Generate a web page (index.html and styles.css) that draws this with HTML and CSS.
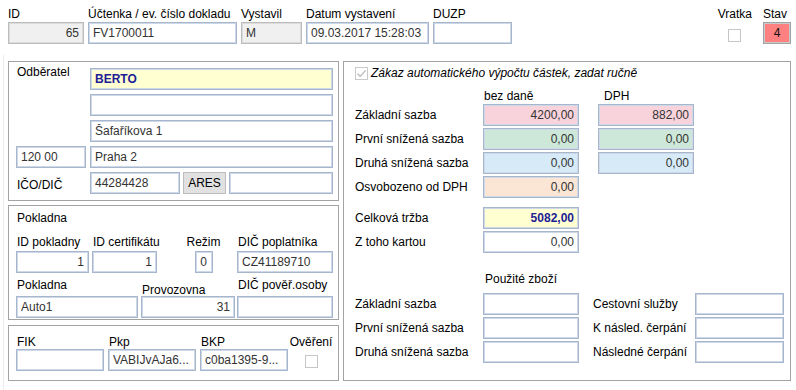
FILE: index.html
```html
<!DOCTYPE html>
<html lang="cs">
<head>
    <meta charset="UTF-8">
    <meta name="viewport" content="width=device-width, initial-scale=1.0">
    <title>Účtenka</title>
    <link rel="stylesheet" href="styles.css">
</head>
<body>
<div class="page">
    <div class="header">
        <div class="field w-id">
            <label>ID</label>
            <input class="inp off num" value="65" readonly>
        </div>
        <div class="field w-doc">
            <label>Účtenka / ev. číslo dokladu</label>
            <input class="inp" value="FV1700011" readonly>
        </div>
        <div class="field w-user">
            <label>Vystavil</label>
            <input class="inp off" value="M" readonly>
        </div>
        <div class="field w-date">
            <label>Datum vystavení</label>
            <input class="inp" value="09.03.2017 15:28:03" readonly>
        </div>
        <div class="field w-duzp">
            <label>DUZP</label>
            <input class="inp" value="" readonly>
        </div>
        <div class="field vratka">
            <label>Vratka</label>
            <span class="chk"></span>
        </div>
        <div class="field stav">
            <label>Stav</label>
            <input class="inp stav-inp" value="4" readonly>
        </div>
    </div>

    <div class="main">
        <div class="left">
            <div class="box odberatel">
                <label class="lbl-top">Odběratel</label>
                <input class="inp yellow strong" value="BERTO" readonly>
                <span></span>
                <input class="inp" value="" readonly>
                <span></span>
                <input class="inp" value="Šafaříkova 1" readonly>
                <input class="inp" value="120 00" readonly>
                <input class="inp" value="Praha 2" readonly>
                <label class="lbl-bottom">IČO/DIČ</label>
                <div class="ico-row">
                    <input class="inp ico" value="44284428" readonly>
                    <button class="btn-ares">ARES</button>
                    <input class="inp dic" value="" readonly>
                </div>
            </div>

            <div class="box pokladna">
                <div class="box-title">Pokladna</div>
                <div class="prow">
                    <div class="cell c-idp">
                        <label>ID pokladny</label>
                        <input class="inp num" value="1" readonly>
                    </div>
                    <div class="cell c-idc">
                        <label>ID certifikátu</label>
                        <input class="inp num" value="1" readonly>
                    </div>
                    <div class="cell c-rezim">
                        <label>Režim</label>
                        <input class="inp rezim" value="0" readonly>
                    </div>
                    <div class="cell c-dic">
                        <label>DIČ poplatníka</label>
                        <input class="inp" value="CZ41189710" readonly>
                    </div>
                </div>
                <div class="prow second">
                    <div class="cell c-name">
                        <label>Pokladna</label>
                        <input class="inp" value="Auto1" readonly>
                    </div>
                    <div class="cell c-prov">
                        <label class="low">Provozovna</label>
                        <input class="inp num" value="31" readonly>
                    </div>
                    <div class="cell c-dic2">
                        <label>DIČ pověř.osoby</label>
                        <input class="inp" value="" readonly>
                    </div>
                </div>
            </div>

            <div class="box eet">
                <div class="cell c-code">
                    <label>FIK</label>
                    <input class="inp" value="" readonly>
                </div>
                <div class="cell c-code">
                    <label>Pkp</label>
                    <input class="inp" value="VABIJvAJa6..." readonly>
                </div>
                <div class="cell c-code">
                    <label>BKP</label>
                    <input class="inp" value="c0ba1395-9..." readonly>
                </div>
                <div class="cell c-check">
                    <label>Ověření</label>
                    <span class="chk"></span>
                </div>
            </div>
        </div>

        <div class="box amounts">
            <div class="manual">
                <span class="chk checked">
                    <svg width="11" height="11" viewBox="0 0 11 11"><path d="M1.5 5.8 L4.2 8.4 L9.6 2.4" fill="none" stroke="#b8b8b8" stroke-width="1.3"/></svg>
                </span>
                <span class="manual-text">Zákaz automatického výpočtu částek, zadat ručně</span>
            </div>

            <div class="rates">
                <span></span>
                <div class="col-head">bez daně</div>
                <div class="col-head dph">DPH</div>

                <label>Základní sazba</label>
                <input class="inp num pink" value="4200,00" readonly>
                <input class="inp num pink right" value="882,00" readonly>

                <label>První snížená sazba</label>
                <input class="inp num green" value="0,00" readonly>
                <input class="inp num green right" value="0,00" readonly>

                <label>Druhá snížená sazba</label>
                <input class="inp num blue" value="0,00" readonly>
                <input class="inp num blue right" value="0,00" readonly>

                <label>Osvobozeno od DPH</label>
                <input class="inp num peach" value="0,00" readonly>
                <span></span>
            </div>

            <div class="rates totals">
                <label>Celková tržba</label>
                <input class="inp num yellow strong" value="5082,00" readonly>
                <span></span>

                <label>Z toho kartou</label>
                <input class="inp num" value="0,00" readonly>
                <span></span>
            </div>

            <div class="used">
                <span></span>
                <div class="col-head used-head">Použité zboží</div>
                <span></span>
                <span></span>

                <label>Základní sazba</label>
                <input class="inp" value="" readonly>
                <label class="lbl2">Cestovní služby</label>
                <input class="inp" value="" readonly>

                <label>První snížená sazba</label>
                <input class="inp" value="" readonly>
                <label class="lbl2">K násled. čerpání</label>
                <input class="inp" value="" readonly>

                <label>Druhá snížená sazba</label>
                <input class="inp" value="" readonly>
                <label class="lbl2">Následné čerpání</label>
                <input class="inp" value="" readonly>
            </div>
        </div>
    </div>
</div>
</body>
</html>
```

FILE: styles.css
```css
body {
    margin: 0;
    background-color: #fff;
    font-family: "Liberation Sans", Arial, sans-serif;
    font-size: 12px;
    color: #000;
}

label {
    white-space: nowrap;
}

.page {
    width: 796px;
    height: 390px;
    box-sizing: border-box;
    padding: 6px 5px 0 3px;
    overflow: hidden;
}

/* inputs */
.inp {
    height: 22px;
    box-sizing: border-box;
    margin: 0;
    padding: 0 4px;
    border: 1px solid #a7b6cb;
    box-shadow: inset 0 0 0 1px #cdd8e8;
    background-color: #fff;
    color: #333;
    font-family: inherit;
    font-size: 12px;
    outline: none;
    min-width: 0;
}

.inp.off {
    background-color: #f0f0f0;
    border-color: #bcbcbc;
    box-shadow: inset 0 0 0 1px #dcdcdc;
}

.inp.num {
    text-align: right;
}

.inp.strong {
    font-weight: bold;
    color: #1d1d96;
}

.yellow { background-color: #ffffd2; }
.pink { background-color: #f9d3dc; }
.green { background-color: #cde8d8; }
.blue { background-color: #d6ebf7; }
.peach { background-color: #fbe5d4; }

.chk {
    display: block;
    width: 13px;
    height: 13px;
    box-sizing: border-box;
    border: 1px solid #c6c6c6;
    background-color: #fff;
}

.chk svg {
    display: block;
    margin: 0;
}

/* header row */
.header {
    display: flex;
    padding-left: 5px;
}

.field {
    display: flex;
    flex-direction: column;
    margin-right: 4px;
}

.field label {
    line-height: 16px;
}

.w-id { width: 76px; }
.w-doc { width: 149px; }
.w-user { width: 61px; }
.w-date { width: 123px; margin-right: 4px; }
.w-duzp { width: 79px; }

.vratka {
    margin-left: auto;
    margin-right: 11px;
    align-items: center;
}

.vratka .chk {
    margin-top: 7px;
}

.stav {
    width: 28px;
    margin-right: 0;
}

.stav-inp {
    text-align: center;
    padding: 0;
    background-color: #ff8080;
    color: #111;
    border-color: #a3a3a3;
    box-shadow: inset 0 0 0 1px #c9c9c9;
}

/* main part */
.main {
    display: flex;
    margin-top: 11px;
    padding: 6px 0 9px 4px;
    border-left: 1px solid #ececec;
    height: 335px;
    box-sizing: border-box;
}

.left {
    width: 331px;
    display: flex;
    flex-direction: column;
    margin-right: 4px;
}

.box {
    border: 1px solid #a3a3a3;
    box-sizing: border-box;
}

/* Odberatel */
.odberatel {
    display: grid;
    grid-template-columns: 70px 243px;
    grid-auto-rows: 22px;
    gap: 4px;
    padding: 6px 5px 6px 7px;
    margin-bottom: 4px;
}

.lbl-top {
    align-self: start;
    line-height: 12px;
    margin-top: -2px;
    padding-left: 1px;
}

.lbl-bottom {
    align-self: end;
    line-height: 16px;
    margin-bottom: 1px;
    padding-left: 1px;
}

.ico-row {
    display: flex;
    gap: 3px;
}

.ico { width: 90px; }
.dic { width: 104px; }

.btn-ares {
    width: 43px;
    height: 22px;
    margin: 0;
    padding: 0;
    border: 1px solid #bdbdbd;
    background-color: #e1e1e1;
    color: #000;
    font-family: inherit;
    font-size: 12px;
}

/* Pokladna */
.pokladna {
    padding: 4px 5px 1px 7px;
    margin-bottom: 5px;
}

.box-title {
    line-height: 16px;
    padding-left: 1px;
}

.prow {
    display: flex;
    align-items: flex-end;
    margin-top: 8px;
}

.prow.second {
    margin-top: 4px;
}

.cell {
    display: flex;
    flex-direction: column;
}

.cell label {
    line-height: 16px;
    padding-left: 1px;
}

.prow .cell label {
    margin-bottom: 1px;
}

.prow.second .cell label {
    margin-bottom: 3px;
}

.prow.second .cell label.low {
    margin-bottom: -2px;
}

.c-idp { width: 73px; margin-right: 3px; }
.c-idc { width: 65px; margin-right: 16px; }
.c-rezim { width: 61px; margin-right: 3px; align-items: center; }
.c-dic { width: 96px; }

.c-rezim label {
    padding-left: 0;
}

.rezim {
    width: 18px;
    padding: 0;
    text-align: center;
}

.c-name { width: 122px; margin-right: 3px; }
.c-prov { width: 94px; margin-right: 2px; }
.c-dic2 { width: 96px; }

/* EET codes */
.eet {
    display: flex;
    gap: 4px;
    padding: 10px 5px 9px 7px;
    height: 56px;
}

.eet .cell label {
    line-height: 13px;
}

.c-code {
    width: 88px;
}

.c-check {
    flex: 1;
    align-items: center;
    margin-left: -3px;
}

.c-check label {
    padding-left: 0;
}

.c-check .chk {
    margin-top: 6px;
}

/* amounts */
.amounts {
    width: 448px;
    padding: 4px 0 0 11px;
}

.manual {
    display: flex;
    align-items: center;
    height: 14px;
}

.manual-text {
    font-style: italic;
    margin-left: 3px;
    line-height: 14px;
}

.chk.checked {
    border-color: #c9c9c9;
}

.rates {
    display: grid;
    grid-template-columns: 128px 96px 115px;
    grid-template-rows: 12px;
    grid-auto-rows: 22px;
    row-gap: 2px;
    margin-top: 10px;
}

.rates label,
.used label {
    align-self: center;
    line-height: 14px;
}

.col-head {
    line-height: 12px;
    padding-left: 1px;
}

.col-head.dph {
    justify-self: end;
    width: 96px;
    box-sizing: border-box;
    padding-left: 6px;
}

.rates .right {
    justify-self: end;
    width: 96px;
}

.totals {
    grid-template-rows: 22px;
    margin-top: 9px;
}

.used {
    display: grid;
    grid-template-columns: 128px 96px 116px 89px;
    grid-template-rows: 19px;
    grid-auto-rows: 22px;
    row-gap: 2px;
    margin-top: 19px;
}

.used-head {
    align-self: start;
    line-height: 14px;
    padding-left: 2px;
}

.used .lbl2 {
    padding-left: 14px;
}
```
